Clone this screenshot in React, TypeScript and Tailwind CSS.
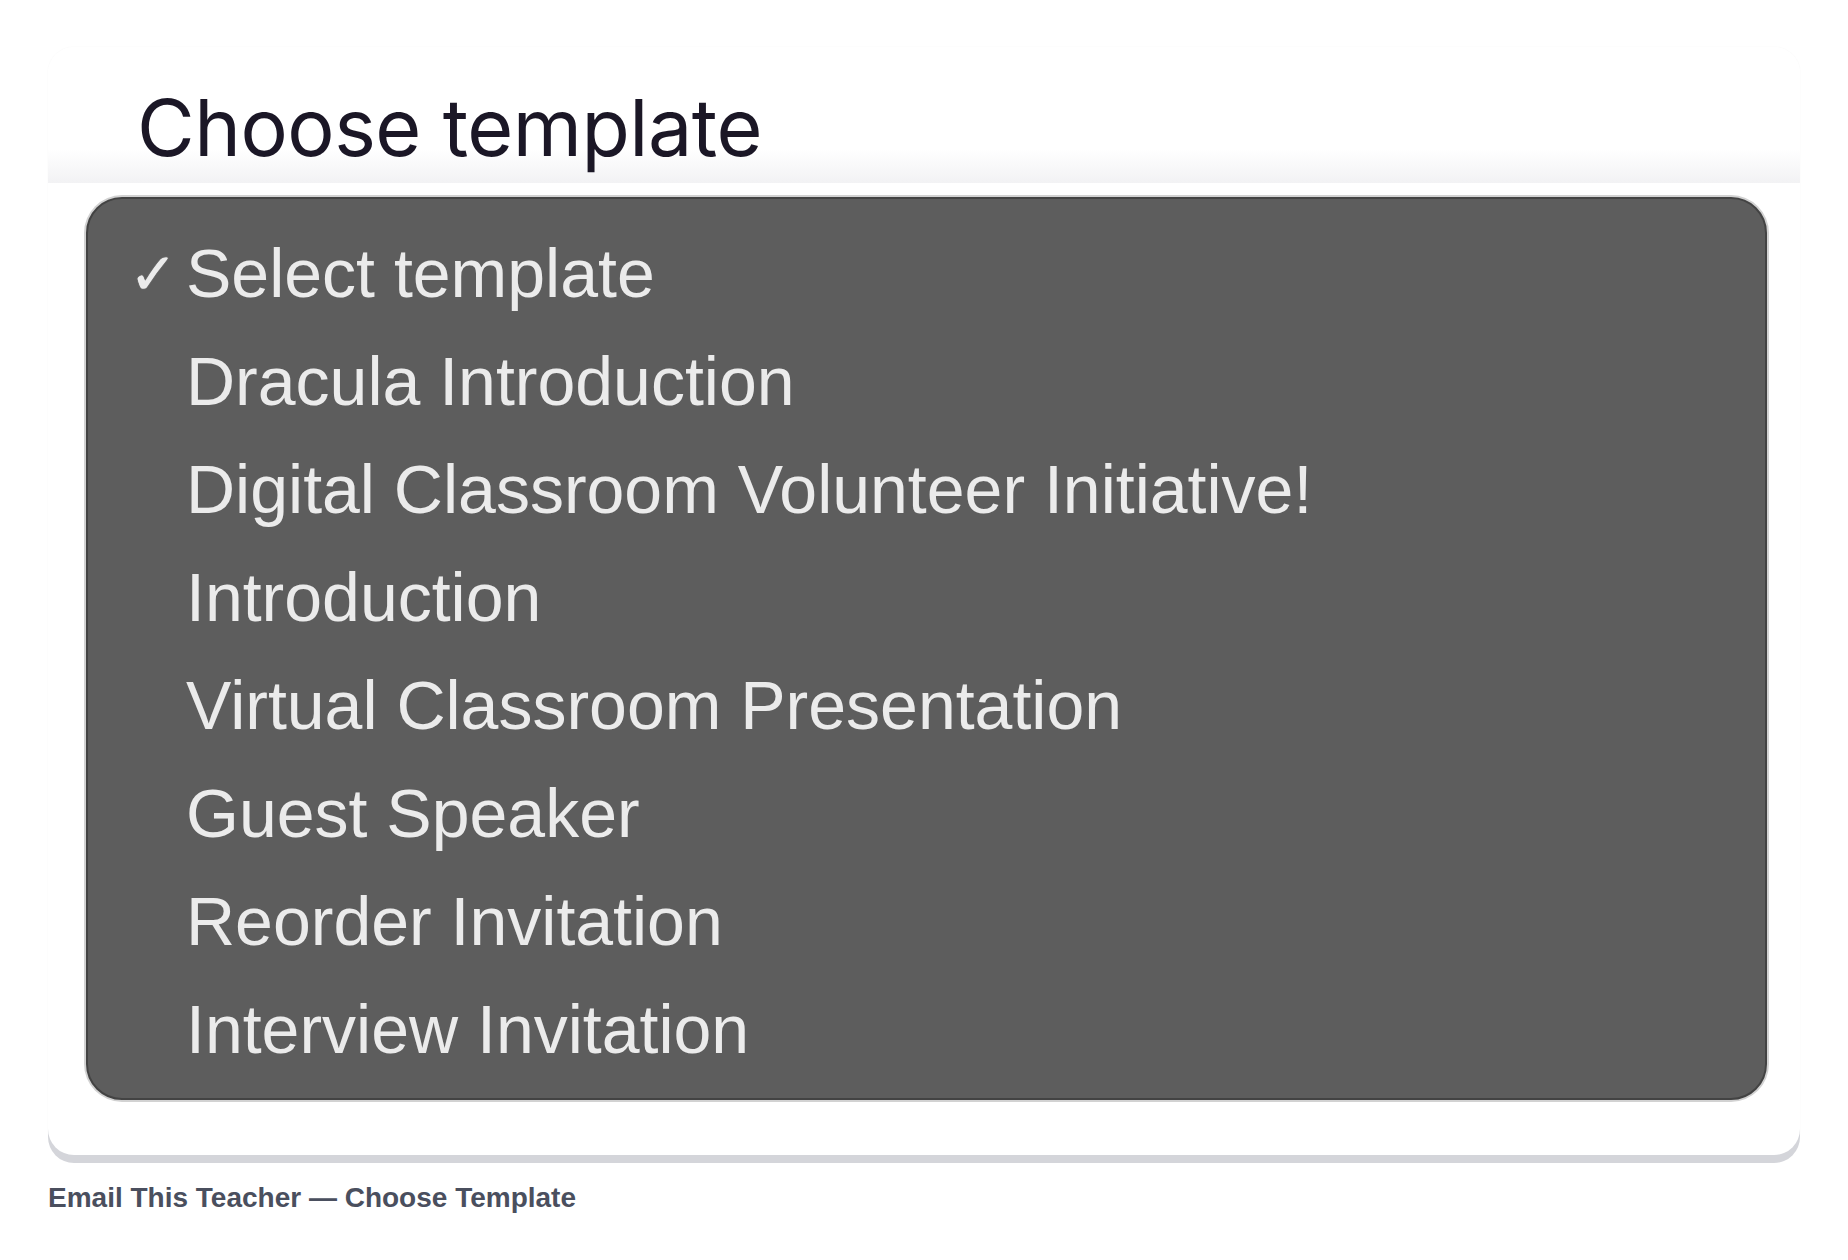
const templates = [
  'Select template',
  'Dracula Introduction',
  'Digital Classroom Volunteer Initiative!',
  'Introduction',
  'Virtual Classroom Presentation',
  'Guest Speaker',
  'Reorder Invitation',
  'Interview Invitation',
];

export default function App() {
  const selected = 0;

  return (
    <div className="min-h-screen bg-white px-[48px] pt-[47px]">
      <div className="rounded-[26px] bg-white shadow-[0_8px_0_#d4d5da,0_0_2px_rgba(0,0,0,0.04)]">
        <div className="h-[136px] rounded-t-[26px] bg-gradient-to-b from-white via-white via-75% to-[#f2f2f4] pl-[89px] pt-[41px]">
          <h1 className="font-['Inter',sans-serif] text-[79px] font-normal leading-none tracking-[-0.5px] text-[#1b1726]">
            Choose template
          </h1>
        </div>
        <div className="pb-[55px] pl-[38px] pr-[33px] pt-[14px]">
          <ul className="rounded-[36px] border-2 border-[#434343] bg-[#5d5d5d] pb-[15px] pt-[20px] shadow-[0_0_0_2px_#d2d2d2]">
            {templates.map((name, i) => (
              <li key={name} className="flex h-[108px] items-center font-['Liberation_Sans',sans-serif] text-[68px] text-[#ebebeb]">
                <span className="w-[98px] pl-[41px] text-[58px] [text-shadow:0_0_1px_#ebebeb]">{i === selected ? '✓' : ''}</span>
                <span>{name}</span>
              </li>
            ))}
          </ul>
        </div>
      </div>
      <p className="mt-[22px] font-['Liberation_Sans',sans-serif] text-[28px] font-bold text-[#4a4f5e]">
        Email This Teacher — Choose Template
      </p>
    </div>
  );
}
